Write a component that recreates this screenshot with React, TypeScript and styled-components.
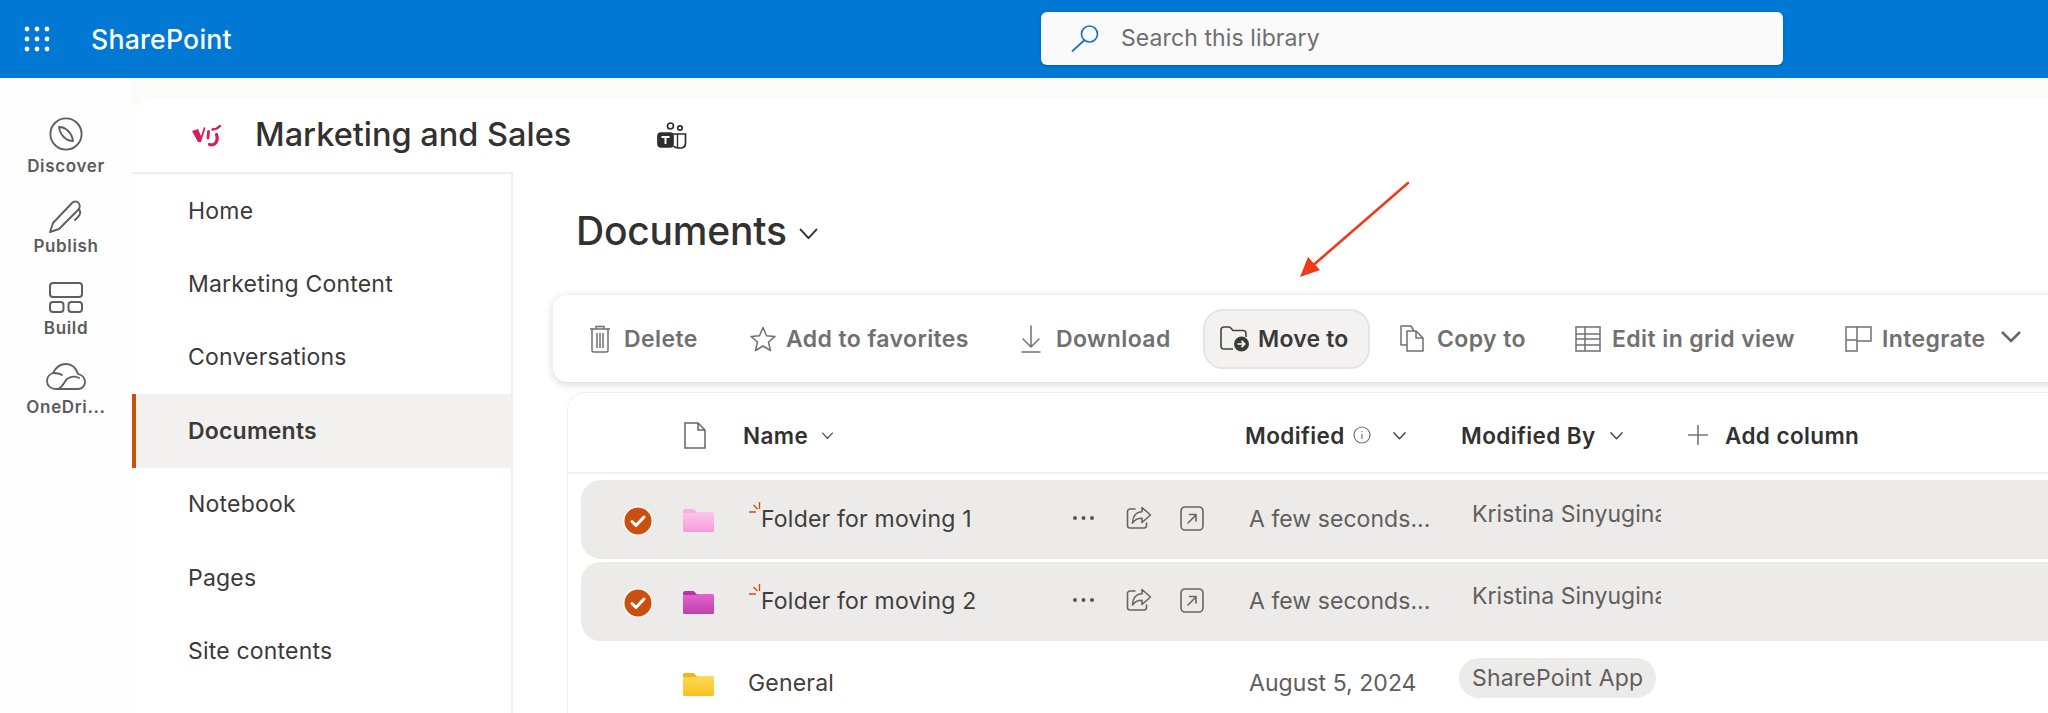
import React from "react";
import styled, { createGlobalStyle } from "styled-components";

const Global = createGlobalStyle`
  html, body { margin: 0; padding: 0; background: #fff; }
  #root { width: 2048px; height: 713px; overflow: hidden; }
  * { box-sizing: border-box; }
`;

const Page = styled.div`
  position: relative;
  width: 2048px;
  height: 713px;
  overflow: hidden;
  display: flex;
  flex-direction: column;
  font-family: Inter, "Liberation Sans", sans-serif;
  color: #323130;
  background: #fbfbfa;
`;

const TopBar = styled.header`
  height: 78px;
  flex: none;
  background: #0078d4;
  display: flex;
  align-items: center;
  padding-left: 24px;
`;
const Waffle = styled.svg`
  width: 26px;
  height: 26px;
  margin-right: 41px;
`;
const Brand = styled.span`
  width: 950px;
  font-size: 26.7px;
  font-weight: 500;
  color: #fff;
  letter-spacing: 0.2px;
`;
const SearchBox = styled.div`
  width: 742px;
  height: 53px;
  margin-top: -2px;
  border-radius: 6px;
  background: #fafafa;
  box-shadow: 0 1px 3px rgba(0, 0, 0, 0.2);
  display: flex;
  align-items: center;
  gap: 22px;
  padding-left: 30px;
  font-size: 23px;
  letter-spacing: 0.1px;
  color: #6e6e6e;
`;

const Body = styled.div`
  flex: 1;
  display: flex;
  min-height: 0;
`;
const Rail = styled.nav`
  width: 132px;
  flex: none;
  background: #fefefe;
  display: flex;
  flex-direction: column;
  align-items: center;
  padding-top: 39px;
`;
const RailItem = styled.div<{ $h: number; $gap: number }>`
  height: ${(p) => p.$h}px;
  width: 100%;
  display: flex;
  flex-direction: column;
  align-items: center;
  color: #5c5c5c;
  font-size: 17px;
  font-weight: 600;
  letter-spacing: 0.65px;
  line-height: 20px;
  white-space: nowrap;
  svg {
    display: block;
    flex: none;
    margin-bottom: ${(p) => p.$gap}px;
  }
`;

const Main = styled.main`
  flex: 1;
  margin-top: 20px;
  background: #fff;
  border-top-left-radius: 22px;
  display: flex;
  flex-direction: column;
  min-height: 0;
`;
const SiteHeader = styled.div`
  height: 74px;
  flex: none;
  display: flex;
  align-items: center;
  padding-left: 60px;
`;
const SiteTitle = styled.h1`
  margin: 0 86px 0 33px;
  padding-bottom: 2px;
  font-size: 32.5px;
  font-weight: 500;
  color: #323130;
  white-space: nowrap;
`;
const Content = styled.div`
  flex: 1;
  display: flex;
  min-height: 0;
`;
const SideNav = styled.nav`
  width: 381px;
  flex: none;
  border-top: 2px solid #efeeed;
  border-right: 2px solid #efeeed;
`;
const NavItem = styled.div<{ $active?: boolean }>`
  height: 73.4px;
  display: flex;
  align-items: center;
  padding-left: ${(p) => (p.$active ? 52 : 56)}px;
  font-size: 23px;
  letter-spacing: 0.2px;
  font-weight: ${(p) => (p.$active ? 600 : 400)};
  color: #3b3a39;
  background: ${(p) => (p.$active ? "#f2f1f0" : "transparent")};
  border-left: ${(p) => (p.$active ? "4px solid #ca5010" : "none")};
`;

const Library = styled.section`
  flex: 1;
  min-width: 0;
  padding-left: 40px;
`;
const LibraryTitle = styled.div`
  height: 123px;
  display: flex;
  align-items: center;
  gap: 11px;
  padding: 0 0 6px 23px;
  font-size: 39px;
  font-weight: 500;
  color: #323130;
  letter-spacing: -0.2px;
  svg { margin-top: 6px; }
`;
const Toolbar = styled.div`
  height: 87px;
  width: 1600px;
  margin-bottom: 10px;
  border-radius: 14px;
  background: #fff;
  box-shadow: 0 2px 9px rgba(0, 0, 0, 0.17);
  display: flex;
  align-items: center;
  padding-left: 36px;
`;
const ToolButton = styled.div<{ $w: number; $active?: boolean; $icon: number; $lead?: number }>`
  flex: none;
  width: ${(p) => p.$w}px;
  margin-left: ${(p) => p.$lead ?? 0}px;
  height: ${(p) => (p.$active ? 60 : 40)}px;
  display: flex;
  align-items: center;
  gap: ${(p) => p.$icon}px;
  font-size: 23px;
  letter-spacing: 0.4px;
  font-weight: 600;
  white-space: nowrap;
  color: ${(p) => (p.$active ? "#3a3a3a" : "#707070")};
  ${(p) =>
    p.$active &&
    `
    background: #f3f2f1;
    border: 2px solid #e6e5e4;
    border-radius: 20px;
    padding-left: 15px;
    letter-spacing: 0.2px;
  `}
`;
const ToolChevron = styled.svg`
  margin: 0 0 4px 4px;
`;

const Table = styled.div`
  width: 1600px;
  height: 400px;
  margin-left: 14px;
  border: 1px solid #f1f0ef;
  border-right: none;
  border-bottom: none;
  border-top-left-radius: 18px;
`;
const HeadRow = styled.div`
  height: 81px;
  padding-top: 5px;
  border-bottom: 2px solid #f3f2f1;
  display: grid;
  grid-template-columns: 116px 59px 502px 216px 227px 1fr;
  align-items: center;
  font-size: 22.5px;
  letter-spacing: 0.4px;
  font-weight: 600;
  color: #323130;
`;
const HeadCell = styled.div`
  display: flex;
  align-items: center;
  gap: 13px;
  white-space: nowrap;
`;
const InfoIcon = styled.svg`
  margin-left: -5px;
  margin-right: 8px;
`;
const AddColumn = styled(HeadCell)`
  gap: 17px;
`;
const Rows = styled.div`
  margin: 6px 0 0 13px;
  display: flex;
  flex-direction: column;
  gap: 3px;
`;
const Row = styled.div<{ $selected?: boolean }>`
  height: 79px;
  display: grid;
  grid-template-columns: 102px 65px 324px 177px 224px 1fr;
  align-items: center;
  font-size: 23px;
  letter-spacing: 0.05px;
  color: #605e5c;
  background: ${(p) => (p.$selected ? "#ecebe9" : "transparent")};
  border-radius: 20px 0 0 20px;
`;
const CheckCell = styled.div`
  display: flex;
  justify-content: flex-end;
  padding: 2px 30px 0 0;
`;
const IconCell = styled.div`
  display: flex;
  padding-top: 2px;
`;
const NameCell = styled.div<{ $new?: boolean }>`
  position: relative;
  padding-left: ${(p) => (p.$new ? 13 : 0)}px;
  padding-bottom: 1px;
  color: #3f3e3d;
  letter-spacing: 0.2px;
  white-space: nowrap;
`;
const Spark = styled.svg`
  position: absolute;
  left: 1px;
  top: -3px;
  width: 15px;
  height: 15px;
`;
const Actions = styled.div`
  display: flex;
  align-items: center;
  padding-bottom: 3px;
`;
const ModifiedCell = styled.div`
  padding-bottom: 1px;
  white-space: nowrap;
`;
const PersonCell = styled.div`
  width: 189px;
  overflow: hidden;
  white-space: nowrap;
  margin-left: -1px;
  padding-bottom: 11px;
  color: #605e5c;
`;
const Pill = styled.div`
  width: 197px;
  height: 40px;
  margin: 0 0 12px -14px;
  padding-left: 13px;
  display: flex;
  align-items: center;
  border-radius: 20px;
  background: #ecebe9;
  white-space: nowrap;
  letter-spacing: 0.2px;
`;
const Arrow = styled.svg`
  position: absolute;
  left: 1290px;
  top: 175px;
  width: 130px;
  height: 110px;
`;
const ShareSvg = styled.svg`
  margin-left: 31px;
`;
const OpenSvg = styled.svg`
  margin-left: 27px;
`;

const Chevron = ({ s = 16, w = 1.5, c = "#444" }: { s?: number; w?: number; c?: string }) => (
  <svg width={s} height={s} viewBox="0 0 16 16" fill="none">
    <path d="M2 5l6 6.5L14 5" stroke={c} strokeWidth={w} strokeLinecap="round" strokeLinejoin="round" />
  </svg>
);

const FolderIcon = ({ top, bottom, tab }: { top: string; bottom: string; tab: string }) => {
  const id = "g" + top.slice(1);
  return (
    <svg width="31" height="23" viewBox="0 0 31 23">
      <defs>
        <linearGradient id={id} x1="0" y1="0" x2="0" y2="1">
          <stop offset="0" stopColor={top} />
          <stop offset="1" stopColor={bottom} />
        </linearGradient>
      </defs>
      <rect x="0" y="3" width="31" height="20" rx="1.5" fill={`url(#${id})`} />
      <path d="M0 2a2 2 0 012-2h8c1 0 2 1 3 2.500L14 4H0z" fill={tab} />
    </svg>
  );
};

const CheckBadge = () => (
  <svg width="30" height="30" viewBox="0 0 30 30">
    <circle cx="15" cy="15" r="14.2" fill="#ca5010" stroke="#fff" strokeWidth="1.3" />
    <path d="M9 15.5l4 4 8-8.5" fill="none" stroke="#fff" strokeWidth="3" strokeLinecap="round" strokeLinejoin="round" />
  </svg>
);

const ShareIcon = () => (
  <ShareSvg width="27" height="24" viewBox="0 0 27 24" fill="none" stroke="#666" strokeWidth="1.6" strokeLinejoin="round" strokeLinecap="round">
    <path d="M9 3H4a2.500 2.500 0 00-2.500 2.500v14A2.500 2.500 0 004 22h14a2.500 2.500 0 002.500-2.500V17" />
    <path d="M16 1.500l8.500 7.500-8.500 7.500v-4.200c-4 0-7 1-9.500 4.700 0-6 3-11 9.500-11.300z" />
  </ShareSvg>
);

const OpenIcon = () => (
  <OpenSvg width="24" height="25" viewBox="0 0 24 25" fill="none" stroke="#666" strokeWidth="1.6" strokeLinecap="round" strokeLinejoin="round">
    <rect x="1" y="1" width="22" height="23" rx="4" />
    <path d="M8 17l8-8M9.500 8.500H16V15" />
  </OpenSvg>
);

const Dots = () => (
  <svg width="23" height="6" viewBox="0 0 23 6" fill="#555">
    <circle cx="3" cy="3" r="2" />
    <circle cx="11.5" cy="3" r="2" />
    <circle cx="20" cy="3" r="2" />
  </svg>
);

const Sparkle = () => (
  <Spark viewBox="0 0 15 15" fill="none" stroke="#ca5010" strokeWidth="1.4">
    <path d="M10.500 0v7M4.500 3l4 4M0 10h7" />
  </Spark>
);

const RowActions = () => (
  <Actions>
    <Dots />
    <ShareIcon />
    <OpenIcon />
  </Actions>
);

const items = ["Home", "Marketing Content", "Conversations", "Documents", "Notebook", "Pages", "Site contents"];

export default function App() {
  return (
    <Page>
      <Global />
      <TopBar>
        <Waffle viewBox="0 0 26 26" fill="#fff">
          {[3, 13, 23].map((y) =>
            [3, 13, 23].map((x) => <circle key={`${x}-${y}`} cx={x} cy={y} r="2.4" />)
          )}
        </Waffle>
        <Brand>SharePoint</Brand>
        <SearchBox>
          <svg width="28" height="27" viewBox="0 0 28 27" fill="none" stroke="#1a73c4" strokeWidth="1.7" strokeLinecap="round">
            <circle cx="18.5" cy="9" r="8" />
            <path d="M13 15.5L1.5 26" />
          </svg>
          Search this library
        </SearchBox>
      </TopBar>
      <Body>
        <Rail>
          <RailItem $h={83} $gap={5}>
            <svg width="34" height="34" viewBox="0 0 34 34" fill="none" stroke="#5f5f5f" strokeWidth="1.9" strokeLinejoin="round">
              <circle cx="17" cy="17" r="15.6" />
              <path d="M10 10c7 0 13 6 14 14-7 0-13-6-14-14z" />
            </svg>
            Discover
          </RailItem>
          <RailItem $h={82} $gap={2}>
            <svg width="36" height="34" viewBox="0 0 36 34" fill="none" stroke="#5f5f5f" strokeWidth="1.9" strokeLinejoin="round" strokeLinecap="round">
              <path d="M2 32l3-9L24 3c2-2 5-2 6.500 0s1.500 4.500 0 6.500L11 29z" />
              <path d="M31 9c2 3 1 6-1 8l-3 3" />
            </svg>
            Publish
          </RailItem>
          <RailItem $h={81} $gap={5}>
            <svg width="34" height="31" viewBox="0 0 34 31" fill="none" stroke="#5f5f5f" strokeWidth="2">
              <rect x="1" y="1" width="32" height="14" rx="3" />
              <rect x="1" y="20" width="13.500" height="10" rx="3" />
              <rect x="19.500" y="20" width="13.500" height="10" rx="3" />
            </svg>
            Build
          </RailItem>
          <RailItem $h={60} $gap={7}>
            <svg width="40" height="27" viewBox="0 0 40 27" fill="none" stroke="#5f5f5f" strokeWidth="1.8" strokeLinecap="round" strokeLinejoin="round">
              <path d="M10 26c-5 0-9-3-9-8 0-4 3-7 6-8 3-6 8-9 13-9 6 0 10 4 12 10 4 1 7 4 7 8 0 4-3 7-7 7z" />
              <path d="M12 26c5-2 6-7 9-10 4-3 9-3 12-1M7 10c3 0 6 0 9 2" />
            </svg>
            OneDri...
          </RailItem>
        </Rail>
        <Main>
          <SiteHeader>
            <svg width="30" height="23" viewBox="0 0 30 23" fill="none" stroke="#d81f4f" strokeWidth="3.2" strokeLinecap="round" strokeLinejoin="round">
              <path d="M0 7L6 5L9 12L12 3L13.500 4L9 18L6 18Z" fill="#d81f4f" stroke="none" />
              <path d="M16.500 7.500L16 14" strokeWidth="2.800" />
              <path d="M28 2c-2.500 2.500-5 3.500-7.500 3.500" strokeWidth="2.400" />
              <path d="M24.500 10.500c1.500 4 .5 7.500-2 9.500-1.500 1-3 1-5 .5" />
            </svg>
            <SiteTitle>Marketing and Sales</SiteTitle>
            <svg width="30" height="27" viewBox="0 0 30 27" fill="none" stroke="#2e2e2e" strokeWidth="1.7">
              <circle cx="13.500" cy="4" r="3" />
              <circle cx="23" cy="6" r="2.200" />
              <path d="M15 12h13.500v9c0 3.500-2 5-5 5-3.500 0-6-.5-7-2" />
              <path d="M20.500 12v13" strokeWidth="1.400" />
              <rect x="1" y="11" width="15" height="14" rx="3" fill="#2e2e2e" />
              <path d="M4.500 15h8M8.500 15v7" stroke="#fff" strokeWidth="2" />
            </svg>
          </SiteHeader>
          <Content>
            <SideNav>
              {items.map((t) => (
                <NavItem key={t} $active={t === "Documents"}>
                  {t}
                </NavItem>
              ))}
            </SideNav>
            <Library>
              <LibraryTitle>
                Documents
                <Chevron s={21} w={1.5} c="#333" />
              </LibraryTitle>
              <Toolbar>
                <ToolButton $w={161} $icon={13}>
                  <svg width="22" height="28" viewBox="0 0 22 28" fill="none" stroke="#707070" strokeWidth="1.5">
                    <path d="M1 4h20M7 4V1.500h8V4M3 4v21.500a1.500 1.500 0 001.500 1.500h13a1.500 1.500 0 001.500-1.500V4M8 8v15M11 8v15M14 8v15" />
                  </svg>
                  Delete
                </ToolButton>
                <ToolButton $w={270} $icon={10}>
                  <svg width="26" height="26" viewBox="0 0 26 26" fill="none" stroke="#707070" strokeWidth="1.5" strokeLinejoin="round">
                    <path d="M13 1.500l3.500 8.200 8.500.7-6.500 5.600 2 8.500L13 20l-7.500 4.500 2-8.500L1 10.400l8.500-.7z" />
                  </svg>
                  Add to favorites
                </ToolButton>
                <ToolButton $w={183} $icon={14}>
                  <svg width="22" height="28" viewBox="0 0 22 28" fill="none" stroke="#707070" strokeWidth="1.5" strokeLinecap="round" strokeLinejoin="round">
                    <path d="M11 1v20M3 14l8 8 8-8M2 27h18" />
                  </svg>
                  Download
                </ToolButton>
                <ToolButton $w={167} $icon={8} $active>
                  <svg width="30" height="26" viewBox="0 0 30 26" fill="none">
                    <path d="M13 23H4a3 3 0 01-3-3V4a3 3 0 013-3h5a2 2 0 011.500.7L13 4.500h10a3 3 0 013 3V11" stroke="#444" strokeWidth="1.6" />
                    <circle cx="21.500" cy="18" r="7.500" fill="#3a3a3a" />
                    <path d="M17.500 18h7M21.500 14.800l3.200 3.200-3.200 3.200" stroke="#fff" strokeWidth="1.7" />
                  </svg>
                  Move to
                </ToolButton>
                <ToolButton $w={175} $icon={13} $lead={30}>
                  <svg width="24" height="27" viewBox="0 0 24 27" fill="none" stroke="#707070" strokeWidth="1.5" strokeLinejoin="round">
                    <path d="M7 20H1V1h10l3 5" />
                    <path d="M7 6h9l7 7v13H7z" />
                    <path d="M16 6v7h7" />
                  </svg>
                  Copy to
                </ToolButton>
                <ToolButton $w={270} $icon={11}>
                  <svg width="26" height="26" viewBox="0 0 26 26" fill="none" stroke="#707070" strokeWidth="1.5">
                    <rect x="1" y="1" width="24" height="24" />
                    <path d="M1 8h24M1 13h24M1 19h24M10 1v24" />
                  </svg>
                  Edit in grid view
                </ToolButton>
                <ToolButton $w={205} $icon={10}>
                  <svg width="27" height="26" viewBox="0 0 27 26" fill="none" stroke="#707070" strokeWidth="1.5">
                    <path d="M1 1h25v14H12v10H1z" />
                    <path d="M1 14h11V1" />
                  </svg>
                  Integrate
                  <ToolChevron width="22" height="14" viewBox="0 0 22 14" fill="none" stroke="#666" strokeWidth="2.6">
                    <path d="M2 2l9 9 9-9" />
                  </ToolChevron>
                </ToolButton>
              </Toolbar>
              <Table>
                <HeadRow>
                  <div />
                  <svg width="22" height="27" viewBox="0 0 22 27" fill="none" stroke="#666" strokeWidth="1.5">
                    <path d="M1 1h13l7 7v18H1zM14 1v7h7" />
                  </svg>
                  <HeadCell>
                    Name
                    <Chevron s={13} />
                  </HeadCell>
                  <HeadCell>
                    Modified
                    <InfoIcon width="18" height="18" viewBox="0 0 18 18" fill="none" stroke="#777" strokeWidth="1.2">
                      <circle cx="9" cy="9" r="8" />
                      <path d="M9 8v5M9 5v1.200" />
                    </InfoIcon>
                    <Chevron s={15} />
                  </HeadCell>
                  <HeadCell>
                    Modified By
                    <Chevron s={15} />
                  </HeadCell>
                  <AddColumn>
                    <svg width="20" height="20" viewBox="0 0 20 20" stroke="#777" strokeWidth="1.6">
                      <path d="M10 0v20M0 10h20" />
                    </svg>
                    Add column
                  </AddColumn>
                </HeadRow>
                <Rows>
                  <Row $selected>
                    <CheckCell><CheckBadge /></CheckCell>
                    <IconCell><FolderIcon top="#fcc6ea" bottom="#f59bdc" tab="#f7b0e3" /></IconCell>
                    <NameCell $new><Sparkle />Folder for moving 1</NameCell>
                    <RowActions />
                    <ModifiedCell>A few seconds...</ModifiedCell>
                    <PersonCell>Kristina Sinyugina</PersonCell>
                  </Row>
                  <Row $selected>
                    <CheckCell><CheckBadge /></CheckCell>
                    <IconCell><FolderIcon top="#e664d2" bottom="#bd40a8" tab="#b3379f" /></IconCell>
                    <NameCell $new><Sparkle />Folder for moving 2</NameCell>
                    <RowActions />
                    <ModifiedCell>A few seconds...</ModifiedCell>
                    <PersonCell>Kristina Sinyugina</PersonCell>
                  </Row>
                  <Row>
                    <div />
                    <IconCell><FolderIcon top="#ffdb5a" bottom="#fcbf1e" tab="#f5b50f" /></IconCell>
                    <NameCell>General</NameCell>
                    <div />
                    <ModifiedCell>August 5, 2024</ModifiedCell>
                    <Pill>SharePoint App</Pill>
                  </Row>
                </Rows>
              </Table>
            </Library>
          </Content>
        </Main>
      </Body>
      <Arrow viewBox="0 0 130 110">
        <path d="M118 8L20 93" stroke="#ee3a18" strokeWidth="2.600" strokeLinecap="round" />
        <path d="M10 102l8-20 12 13z" fill="#ee3a18" />
      </Arrow>
    </Page>
  );
}
